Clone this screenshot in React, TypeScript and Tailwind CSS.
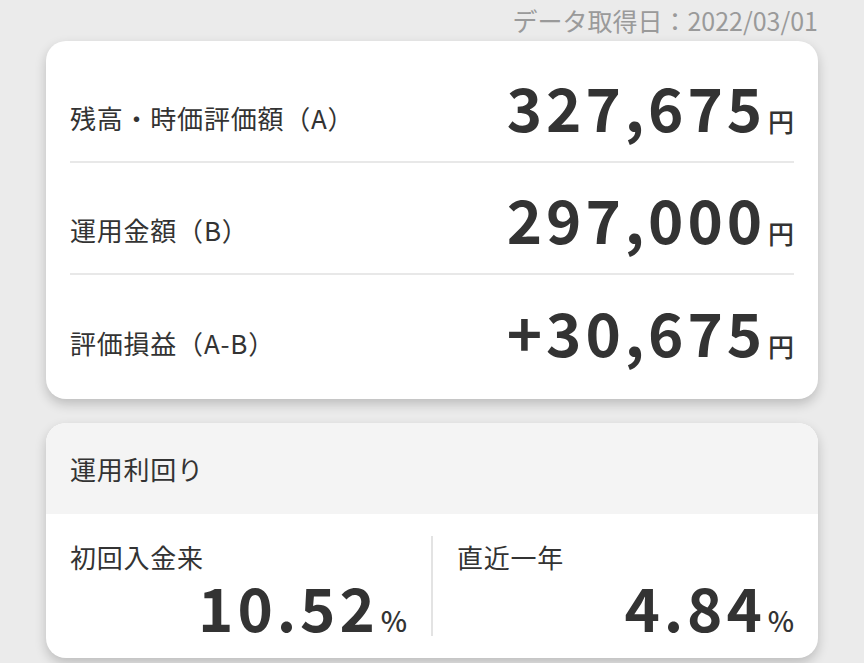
const FONT = { fontFamily: '"Noto Sans CJK JP", "Noto Sans", sans-serif' };

type Row = { label: string; value: string };

const rows: Row[] = [
  { label: '残高・時価評価額（A）', value: '327,675' },
  { label: '運用金額（B）', value: '297,000' },
  { label: '評価損益（A-B）', value: '+30,675' },
];

function Amount({ value, unit }: { value: string; unit: string }) {
  return (
    <div className="flex items-baseline text-[#333]">
      <span className="text-[60px] font-bold leading-none tracking-[0.065em]">{value}</span>
      <span className={`ml-[2px] leading-none font-medium ${unit === '%' ? 'text-[28px]' : 'text-[26px]'}`}>{unit}</span>
    </div>
  );
}

export default function App() {
  return (
    <div className="min-h-[663px] w-[864px] overflow-hidden bg-[#ebebeb] text-[#333]" style={FONT}>
      <div className="px-[46px]">
        <div className="flex h-[41px] items-center justify-end text-[25px] leading-none text-[#9a9a9a]">
          データ取得日：2022/03/01
        </div>

        {/* balance card */}
        <div className="rounded-[20px] bg-white px-6 pt-[10px] pb-[12px] shadow-[0_5px_12px_rgba(0,0,0,0.2)]">
          {rows.map((r, i) => (
            <div
              key={r.label}
              className={`flex h-[112px] items-center justify-between ${i < rows.length - 1 ? 'border-b-2 border-[#e8e8e8]' : ''}`}
            >
              <span className="mt-[22px] text-[26px] tracking-[0.03em]">{r.label}</span>
              <Amount value={r.value} unit="円" />
            </div>
          ))}
        </div>

        {/* yield card */}
        <div className="mt-6 overflow-hidden rounded-[20px] bg-white shadow-[0_5px_12px_rgba(0,0,0,0.2)]">
          <div className="flex h-[91px] items-center bg-[#f4f4f4] px-6 text-[26px] tracking-[0.03em]">運用利回り</div>
          <div className="flex py-[22px]">
            <div className="flex-1 border-r-2 border-[#e3e3e3] px-[24px] pt-[8px]">
              <div className="text-[26px] leading-none tracking-[0.03em]">初回入金来</div>
              <div className="mt-[6px] flex justify-end">
                <Amount value="10.52" unit="%" />
              </div>
            </div>
            <div className="flex-1 px-[24px] pt-[8px]">
              <div className="text-[26px] leading-none tracking-[0.03em]">直近一年</div>
              <div className="mt-[6px] flex justify-end">
                <Amount value="4.84" unit="%" />
              </div>
            </div>
          </div>
        </div>
      </div>
    </div>
  );
}
